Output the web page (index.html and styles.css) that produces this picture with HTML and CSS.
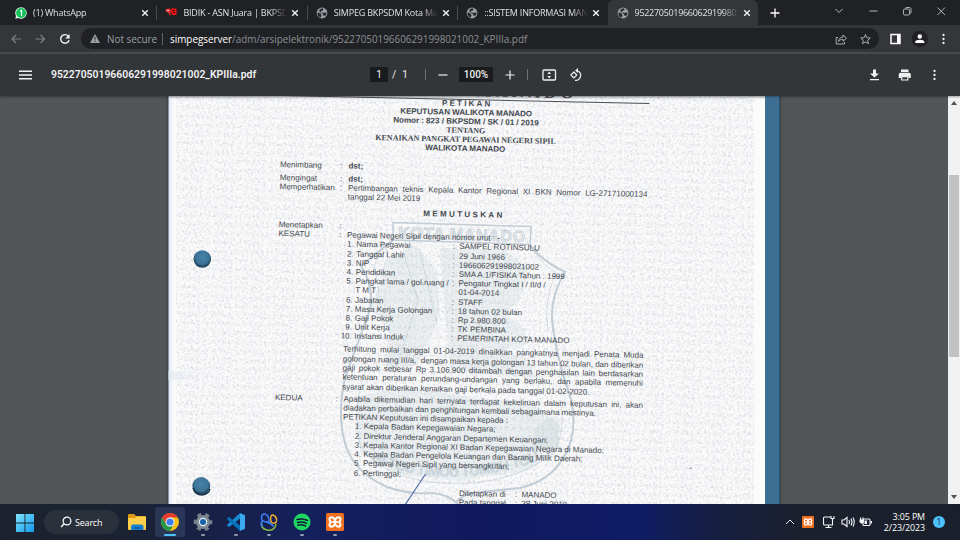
FILE: index.html
```html
<!DOCTYPE html>
<html lang="id">
<head>
<meta charset="utf-8">
<title>95227050196606291998021002_KPIIIa.pdf</title>
<link rel="stylesheet" href="styles.css">
</head>
<body>
<svg width="0" height="0" class="defs">
  <symbol id="globe" viewBox="0 0 12 12"><circle cx="6" cy="6" r="5.4" fill="#9aa0a6"/><path d="M1.5 5.2 4.6 6.6 5.6 8.2 4.7 10.6C2.4 10 1 7.800 1.500 5.200ZM4.200 2 6.600 1.300 7.600 2.200 6.800 3.600 5 4 4.600 5.200 7.600 6 9.800 5.200 10.600 6.400 9.600 8.600 7.700 8.900 6.900 6.900 3.800 5 3.200 3.400Z" fill="#292a2d"/></symbol>
  <symbol id="close" viewBox="0 0 8 8"><path d="M1.200 1.200 6.800 6.800M6.800 1.200 1.200 6.800" stroke="#f1f3f4" stroke-width="1.350" fill="none"/></symbol>
  <symbol id="xampp" viewBox="0 0 18 18"><rect width="18" height="18" rx="1.500" fill="#f0711f"/><path d="M9 7.300C8 5 7 4.300 5.700 4.300 4.200 4.300 3.500 5.200 3.500 6.600 3.500 8 4.300 8.500 5 9 4.300 9.500 3.500 10 3.500 11.400 3.500 12.800 4.200 13.700 5.700 13.700 7 13.700 8 13 9 10.700 10 13 11 13.700 12.300 13.700 13.800 13.700 14.500 12.800 14.500 11.400 14.500 10 13.700 9.500 13 9 13.700 8.500 14.500 8 14.500 6.600 14.500 5.200 13.800 4.300 12.300 4.300 11 4.300 10 5 9 7.300ZM6.500 9H11.500" fill="none" stroke="#fff" stroke-width="2"/></symbol>
</svg>

<header class="tabs">
  <div class="tab">
    <svg class="fav" viewBox="0 0 12 12"><path d="M6 .2a5.800 5.800 0 1 1-2.800 10.900L.3 11.800 1 8.900A5.800 5.800 0 0 1 6 .2Z" fill="#e8f5e9"/><circle cx="6.100" cy="6" r="5" fill="#18c25c"/><path d="M5 4.300 6.500 3.500V8.700" stroke="#fff" stroke-width="1.100" fill="none"/></svg>
    <span class="tab-name">(1) WhatsApp</span><svg class="x"><use href="#close"/></svg>
  </div>
  <div class="tab">
    <svg class="fav" viewBox="0 0 12 12"><path d="M.5 2 5 1.500 6 4.500 5 6 6 9 4 7.500 3 5.500 1 5Z" fill="#d33"/><path d="M6 1.500H11.500V7.500L8 8.500 6 6Z" fill="#e11"/><path d="M7.500 3.500H9.500M8 5.500H10" stroke="#300"/><path d="M2 3.500H4" stroke="#fff" stroke-width=".7"/></svg>
    <span class="tab-name">BIDIK - ASN Juara | BKPSDM</span><svg class="x"><use href="#close"/></svg>
  </div>
  <div class="tab">
    <svg class="fav"><use href="#globe"/></svg>
    <span class="tab-name">SIMPEG BKPSDM Kota Manado</span><svg class="x"><use href="#close"/></svg>
  </div>
  <div class="tab last">
    <svg class="fav"><use href="#globe"/></svg>
    <span class="tab-name">::SISTEM INFORMASI MANAJEMEN</span><svg class="x"><use href="#close"/></svg>
  </div>
  <div class="tab active">
    <svg class="fav"><use href="#globe"/></svg>
    <span class="tab-name">95227050196606291998021002</span><svg class="x"><use href="#close"/></svg>
  </div>
  <svg class="plus" viewBox="0 0 10 10"><path d="M5 .5V9.500M.5 5H9.500" stroke="#fff" stroke-width="1.300"/></svg>
  <svg class="window" viewBox="0 0 120 14"><g fill="none" stroke="#c4c7c9" stroke-width=".9"><path d="M6.500 5 10 8.500 13.500 5M40.500 7H48.500M108.500 3.500 116 11M116 3.500 108.500 11"/><rect x="74.500" y="5" width="6" height="6" rx="1.200"/><path d="M76.500 4.500C76.600 3.500 77 3.500 78 3.500H80.500C82 3.500 82 4.500 82 5.500V8C82 9 81.800 9.300 81 9.500"/></g></svg>
</header>

<nav class="address">
  <svg class="navs" viewBox="0 0 70 14"><g fill="none" stroke-width="1.200"><path d="M11 7H2M6 3 2 7 6 11M25.500 7H34.500M30.500 3 34.500 7 30.500 11" stroke="#7b7e82"/><path d="M58.200 4A4.300 4.300 0 1 0 59.100 8.200" stroke="#f1f3f4" stroke-width="1.400"/></g><path d="M59.600 2V6.400H55.200Z" fill="#f1f3f4"/></svg>
  <div class="omni">
    <svg class="warn" viewBox="0 0 10 9"><path d="M5 0 10 9H0Z" fill="#9aa0a6"/><path d="M5 3V5.700M5 6.700V7.800" stroke="#202124"/></svg>
    <span class="insecure">Not secure</span><i class="bar"></i>
    <span class="url"><b>simpegserver</b>/adm/arsipelektronik/95227050196606291998021002_KPIIIa.pdf</span>
    <svg class="omni-icons" viewBox="0 0 36 12"><g fill="none" stroke="#a9adb1" stroke-width="1"><path d="M3 4.500H1.200V11H9.500V9M3.500 8.500C3.800 5.500 5.500 4 8 4V2L11.500 5.200 8 8.300V6.300C6 6.300 4.500 7 3.500 8.500Z"/><path d="M30.500 1.500 31.900 4.700 35.300 5 32.700 7.300 33.500 10.700 30.500 8.900 27.500 10.700 28.300 7.300 25.700 5 29.100 4.700Z"/></g></svg>
  </div>
  <svg class="tools" viewBox="0 0 60 18"><rect x="1" y="4.500" width="9" height="9" fill="none" stroke="#fff" stroke-width="1.500"/><path d="M7 4.500H10V13.500H7Z" fill="#fff"/><circle cx="29.800" cy="9" r="8.300" fill="#202124"/><circle cx="29.800" cy="6.500" r="2.200" fill="#fff"/><path d="M25.200 13V12C25.200 9 34.400 9 34.400 12V13Z" fill="#fff"/><g fill="#e8eaed"><circle cx="53.500" cy="5" r="1.150"/><circle cx="53.500" cy="9" r="1.150"/><circle cx="53.500" cy="13" r="1.150"/></g></svg>
</nav>

<section class="pdfbar">
  <svg class="menu" viewBox="0 0 13 10"><path d="M0 1.200H13M0 5H13M0 8.800H13" stroke="#f1f1f1" stroke-width="1.500"/></svg>
  <h1>95227050196606291998021002_KPIIIa.pdf</h1>
  <div class="pager"><span class="field page">1</span><span class="of">/</span><span class="total">1</span></div>
  <i class="sep"></i>
  <svg class="sign" viewBox="0 0 10 10"><path d="M.5 5H9.500" stroke="#f1f1f1" stroke-width="1.200"/></svg>
  <span class="field zoom">100%</span>
  <svg class="sign" viewBox="0 0 10 10"><path d="M.5 5H9.500M5 .5V9.500" stroke="#f1f1f1" stroke-width="1.200"/></svg>
  <i class="sep after-zoom"></i>
  <svg class="fit" viewBox="0 0 42 14"><rect x="1" y="2" width="12.500" height="10" rx="1" fill="none" stroke="#f1f1f1" stroke-width="1.300"/><path d="M7.200 3.600 9 6H5.400ZM7.200 10.400 9 8H5.400Z" fill="#f1f1f1"/><g fill="none" stroke="#f1f1f1" stroke-width="1.200"><path d="M31.800 4 34.800 7 31.800 10 28.800 7ZM34.500 2.500A4.800 4.800 0 1 1 33 12.300"/></g><path d="M36 0V5L33 2.500Z" fill="#f1f1f1"/></svg>
  <svg class="actions" viewBox="0 0 70 14"><path d="M3 1.500H6V5.500H9L4.500 9.500 0 5.500H3ZM0 11H9V12.300H0Z" fill="#f1f1f1"/><path d="M31 1.500H38.500V4H31ZM30.500 4.700H39Q40.800 4.700 40.800 6.500V10H38.500V8H31V10H28.700V6.500Q28.700 4.700 30.500 4.700Z" fill="#f1f1f1"/><path d="M31.700 8.600H37.800V12H31.700Z" fill="none" stroke="#f1f1f1" stroke-width="1.200"/><g fill="#f1f1f1"><circle cx="64.500" cy="3" r="1.150"/><circle cx="64.500" cy="7" r="1.150"/><circle cx="64.500" cy="11" r="1.150"/></g></svg>
</section>

<main class="viewer">
  <article class="scan">
    <svg class="backdrop" viewBox="168 96 612 408">
      <defs>
        <pattern id="weave" width="31" height="9" patternUnits="userSpaceOnUse" patternTransform="rotate(1.200)"><path d="M1 2 2.500 5 4 2 6 6M8 6 9.500 2 11 6M13 5V2L15 6V3M18 2H20L18 6H21M24 6 25 3 27 5 29 2" fill="none" stroke="#6f7f86" stroke-opacity=".12" stroke-width=".7"/></pattern>
        <radialGradient id="hole" cx=".5" cy=".4"><stop offset="0" stop-color="#4682a9"/><stop offset=".8" stop-color="#3d7296"/><stop offset="1" stop-color="#244963"/></radialGradient>
        <linearGradient id="edge"><stop offset="0" stop-color="#dfe8f3"/><stop offset="1" stop-color="#fbfbfc"/></linearGradient>
        <linearGradient id="fold"><stop offset="0" stop-color="#d9e2ef"/><stop offset="1" stop-color="#fbfbfc" stop-opacity="0"/></linearGradient>
        <linearGradient id="shade" x2="0" y2="1"><stop offset="0" stop-color="#c7cbce"/><stop offset="1" stop-color="#fbfbfc" stop-opacity="0"/></linearGradient>
        <filter id="grain" x="0" y="0" width="1" height="1" color-interpolation-filters="sRGB"><feTurbulence type="fractalNoise" baseFrequency=".45" numOctaves="2" seed="4"/><feColorMatrix values="0 0 0 0 .45 0 0 0 0 .5 0 0 0 0 .56 .9 0 0 0 -.4"/></filter>
      </defs>
      <rect x="168" y="96" width="598" height="408" fill="#fbfbfc"/>
      <rect x="168" y="96" width="6" height="408" fill="url(#edge)"/>
      <rect x="168" y="96" width="598" height="5" fill="url(#shade)"/>
      <rect x="176" y="96" width="578" height="408" fill="url(#weave)"/>
      <rect x="176" y="96" width="578" height="408" filter="url(#grain)" opacity=".6"/>
      <rect x="765" y="96" width="15" height="408" fill="#3d6f94"/>
      <path d="M168.500 96V504" stroke="#4b6377" opacity=".6"/>
      <path d="M779.500 96V504" stroke="#29506c"/>
      <rect x="168" y="371" width="60" height="9" fill="url(#fold)" opacity=".5"/>
      <g fill="none" stroke="#aebdc9" stroke-opacity=".72">
        <path d="M393 222.500 531 226.500 530 244.500 393 240Z" stroke-width="1.500"/>
        <path d="M393 240 361 266Q377 292 368 315Q358 342 345 378Q336 420 347 449Q357 474 387 487Q410 495 433 493Q449 495 458 504M530 245Q542 261 565 272Q548 300 553 328Q559 368 570 395Q579 433 564 457Q550 481 520 488L482 492Q465 492 456 502" stroke-width="2"/>
        <path d="M388 250Q378 256 374 266Q382 292 376 314M533 250Q542 264 556 273Q543 300 548 332M363 377Q352 415 360 444Q378 475 430 482Q505 490 552 454Q567 435 560 400M403 252 418 300 394 375M420 252 437 325" stroke-width="1" stroke-opacity=".45"/>
      </g>
      <g fill="#b4c7cf" fill-opacity=".2">
        <path d="M385 260 415 245 437 270 440 315 418 365 383 370 390 330 370 304 380 286Z"/>
        <path d="M440 248 505 250 528 268 520 300 503 315 522 325 528 344 499 351 530 360 535 378 450 370Z"/>
        <path d="M356 397 400 387 535 405 560 425 558 448 530 470 460 481 400 475 360 453Z"/>
        <path d="M547 418Q559 415 559 422V445L534 454V430Z"/>
      </g>
      <g class="seal"><text transform="translate(398 238) rotate(1.700)" textLength="127">KOTA MANADO</text><path id="ribbon" d="M372 462Q450 492 540 460" fill="none"/><text class="motto"><textPath href="#ribbon">SI TOU TIMOU TUMOU TOU</textPath></text></g>
      <circle cx="202.300" cy="259" r="8.800" fill="url(#hole)"/><circle cx="201.300" cy="486" r="8.900" fill="url(#hole)"/>
      <path d="M193 488Q195 495 202 495 209 494 210 489" fill="none" stroke="#17364b" stroke-width="1.300"/>
      <path d="M425.500 474Q415 490 405 505" fill="none" stroke="#4a63a3" stroke-width="1.100"/>
      <path d="M689 468.500 692 468" stroke="#8993b5"/>
    </svg>
    <div class="sheet">
      <div class="town">MANADO</div>
      <div class="heading">
        <p class="wide">PETIKAN</p>
        <p>KEPUTUSAN WALIKOTA MANADO</p>
        <p>Nomor : 823 / BKPSDM / SK / 01 / 2019</p>
        <p class="serif">TENTANG</p>
        <p class="serif">KENAIKAN PANGKAT PEGAWAI NEGERI SIPIL</p>
        <p>WALIKOTA MANADO</p>
      </div>
      <div class="row first"><span>Menimbang</span><span>:</span><b>dst;</b></div>
      <div class="row second"><span>Mengingat</span><span>:</span><b>dst;</b></div>
      <div class="row"><span>Memperhatikan</span><span>:</span><div><p class="just">Pertimbangan teknis Kepala Kantor Regional XI BKN Nomor LG-27171000134</p><p>tanggal 22 Mei 2019</p></div></div>
      <p class="decide">MEMUTUSKAN</p>
      <div class="row"><span>Menetapkan</span><span>:</span></div>
      <div class="row"><span>KESATU</span><span>:</span><div><p>Pegawai Negeri Sipil dengan nomor urut : -</p></div></div>
      <div class="facts">
        <i>1.</i><span>Nama Pegawai</span><span>:</span><span>SAMPEL ROTINSULU</span>
        <i>2.</i><span>Tanggal Lahir</span><span>:</span><span>29 Juni 1966</span>
        <i>3.</i><span>NIP</span><span>:</span><span>196606291998021002</span>
        <i>4.</i><span>Pendidikan</span><span>:</span><span>SMA A.1/FISIKA Tahun : 1999</span>
        <i>5.</i><span>Pangkat lama / gol.ruang /</span><span>:</span><span>Pengatur Tingkat I / II/d /</span>
        <i></i><span>T M T</span><span></span><span>01-04-2014</span>
        <i>6.</i><span>Jabatan</span><span>:</span><span>STAFF</span>
        <i>7.</i><span>Masa Kerja Golongan</span><span>:</span><span>18 tahun 02 bulan</span>
        <i>8.</i><span>Gaji Pokok</span><span>:</span><span>Rp 2.980.800</span>
        <i>9.</i><span>Unit Kerja</span><span>:</span><span>TK PEMBINA</span>
        <i>10.</i><span>Instansi Induk</span><span>:</span><span>PEMERINTAH KOTA MANADO</span>
      </div>
      <div class="para">
        <p class="just">Terhitung mulai tanggal 01-04-2019 dinaikkan pangkatnya menjadi Penata Muda</p>
        <p class="just">golongan ruang III/a,&nbsp; dengan masa kerja golongan 13 tahun 02 bulan, dan diberikan</p>
        <p class="just">gaji pokok sebesar Rp 3.106.900 ditambah dengan penghasilan lain berdasarkan</p>
        <p class="just">ketentuan peraturan perundang-undangan yang berlaku, dan apabila memenuhi</p>
        <p>syarat akan diberikan kenaikan gaji berkala pada tanggal 01-02-2020.</p>
      </div>
      <div class="row kedua"><span>KEDUA</span><span>:</span>
        <div>
          <p class="just">Apabila dikemudian hari ternyata terdapat kekeliruan dalam keputusan ini, akan</p>
          <p>diadakan perbaikan dan penghitungan kembali sebagaimana mestinya.</p>
          <p>PETIKAN Keputusan ini disampaikan kepada :</p>
          <div class="copies">
            <p>1. Kepala Badan Kepegawaian Negara;</p>
            <p>2. Direktur Jenderal Anggaran Departemen Keuangan;</p>
            <p>3. Kepala Kantor Regional XI Badan Kepegawaian Negara di Manado;</p>
            <p>4. Kepala Badan Pengelola Keuangan dan Barang Milik Daerah;</p>
            <p>5. Pegawai Negeri Sipil yang bersangkutan;</p>
            <p>6. Pertinggal;</p>
          </div>
        </div>
      </div>
      <div class="signed"><span>Ditetapkan di</span><span>:</span><span>MANADO</span><span>Pada tanggal</span><span>:</span><span>28 Juni 2019</span></div>
    </div>
  </article>
  <div class="scroll"><i class="up"></i><i class="thumb"></i><i class="down"></i></div>
</main>

<footer class="taskbar">
  <svg class="start" viewBox="0 0 18 18"><defs><linearGradient id="win" x2="1" y2="1"><stop offset="0" stop-color="#7ee3fb"/><stop offset="1" stop-color="#1499ee"/></linearGradient></defs><path d="M0 0H8.500V8.500H0ZM9.400 0H18V8.500H9.400ZM0 9.400H8.500V18H0ZM9.400 9.400H18V18H9.400Z" fill="url(#win)"/></svg>
  <div class="search"><svg viewBox="0 0 12 12"><circle cx="7" cy="5" r="3.900" fill="none" stroke="#fff" stroke-width="1.200"/><path d="M4.200 7.800 1 11" stroke="#fff" stroke-width="1.400"/></svg>Search</div>
  <div class="apps">
    <div class="app"><svg viewBox="0 0 20 20"><path d="M1 3Q1 2 2 2H7L9 4H18Q19 4 19 5V9H1Z" fill="#dd9c13"/><path d="M1 6H8L10 4.500H18Q19 4.500 19 6V17Q19 18 18 18H2Q1 18 1 17Z" fill="#fdcf4a"/><path d="M4 18V14.500Q4 12.500 6 12.500H14Q16.500 12.500 16.500 14.500V18Z" fill="#1680d0"/><path d="M7 16H13.500" stroke="#0b5ba5" stroke-width="1.500"/></svg></div>
    <div class="app on"><svg viewBox="0 0 20 20"><circle cx="10" cy="10" r="9" fill="#fbc116"/><path d="M2.200 5.500A9 9 0 0 1 17.800 5.500H10L6.100 12.300Z" fill="#e33b2e"/><path d="M2.200 5.500 6.100 12.300 10 14.500 13.900 12.300 9.900 19A9 9 0 0 1 2.200 5.500Z" fill="#279847"/><circle cx="10" cy="10" r="4.500" fill="#fff"/><circle cx="10" cy="10" r="3.600" fill="#3b7ded"/></svg></div>
    <div class="app run"><svg viewBox="0 0 20 20"><circle cx="10" cy="10" r="7.800" fill="none" stroke="#76818b" stroke-width="3" stroke-dasharray="4.100 4.068" stroke-dashoffset="2"/><circle cx="10" cy="10" r="7" fill="#7d8892"/><circle cx="10" cy="10" r="4.200" fill="#e5edf4"/><circle cx="10" cy="10" r="3" fill="#1763aa"/></svg></div>
    <div class="app run"><svg viewBox="0 0 20 20"><path d="M14 1 2 12 .8 13.200 3 15 14 6.500Z" fill="#178bd4"/><path d="M14 19 2 8 .8 6.800 3 5 14 13.500Z" fill="#0872b9"/><path d="M14 1 19 3.300V16.700L14 19Z" fill="#3aa9ee"/></svg></div>
    <div class="app run"><svg viewBox="0 0 20 20"><g fill="none" stroke-width="1.500"><path d="M10 10C10.500 4 7 1.500 4.500 2 2 3 2 7 3.500 8.500Q6 10.500 10 10Z" stroke="#3b82f2"/><path d="M12 10C11 5 12 2.500 14 3 17.500 4.500 18.500 8 17 10.500Q14 12 12 10Z" stroke="#f3ac2e"/><path d="M17 12C16.500 17 12 19 8 18 4 17 2 14.500 2.500 11" stroke="#86bb46"/><path d="M3.500 8.500Q1.500 11 3 14.500M7 9.800Q12 11 14.500 14.500" stroke="#3b82f2"/></g></svg></div>
    <div class="app run"><svg viewBox="0 0 20 20"><circle cx="10" cy="10" r="8.500" fill="#1ed760"/><path d="M5 7.500Q10.500 6 15.500 8.500M5.500 10.500Q10 9 14.500 11.300M6 13.200Q10 12.200 13.500 14" fill="none" stroke="#111a38" stroke-width="1.500" stroke-linecap="round"/></svg></div>
    <div class="app run"><svg viewBox="-1 -1 20 20"><use href="#xampp" width="18" height="18"/></svg></div>
  </div>
  <div class="tray">
    <svg class="chev" viewBox="0 0 10 6"><path d="M1 5 5 1 9 5" fill="none" stroke="#e4e8ee"/></svg>
    <svg class="mini"><use href="#xampp"/></svg>
    <svg class="status" viewBox="0 0 50 14"><g fill="none" stroke="#f2f4f7" stroke-width="1.100"><path d="M8.500 2H2.500Q1.500 2 1.500 3V9Q1.500 10 2.500 10H10.500V7M6.500 10V12.500M3.500 12.500H9.500M10.500 7V4M9 1V3.500H12V1"/><path d="M20 5H22L25 2.500V11.500L22 9H20ZM27 5Q28.200 7 27 9M29 3.500Q31 7 29 10.500M31 2.500Q33.500 7 31 11.500"/><rect x="41" y="4" width="7" height="6.500" rx="1"/></g><path d="M42.500 5.500H45V9H42.500ZM37.500 4.500H42V7L40.500 8.500H39L37.500 7ZM38 2.500H39.200V5H38ZM40.500 2.500H41.700V5H40.500ZM48.500 6H50V8.500H48.500Z" fill="#f2f4f7"/></svg>
    <div class="clock"><span>3:05 PM</span><span>2/23/2023</span></div>
    <span class="badge">1</span>
  </div>
</footer>
</body>
</html>
```

FILE: styles.css
```css
* { box-sizing: border-box; }
body { margin: 0; width: 960px; height: 540px; overflow: hidden; background: #202124; font-family: "Open Sans", "Noto Sans", sans-serif; display: flex; flex-direction: column; }
p, h1 { margin: 0; }
i { font-style: normal; }
svg { flex: none; display: block; }
.defs { position: absolute; }

.tabs { height: 25px; flex: none; display: flex; align-items: center; padding-left: 6px; background: #202124; color: #dfe1e5; font-size: 9px; }
.tab { width: 150.4px; height: 25px; flex: none; display: flex; align-items: center; padding-left: 9px; position: relative; }
.tab:not(.last):not(.active)::after { content: ""; position: absolute; right: -1px; top: 6px; width: 1px; height: 14px; background: #4b4d51; }
.tab.active { background: #35363a; border-radius: 6px 6px 0 0; }
.fav { width: 12px; height: 12px; }
.tab-name { width: 104px; margin-left: 6px; overflow: hidden; white-space: nowrap; letter-spacing: -.2px; mask-image: linear-gradient(90deg, #000 84%, transparent 100%); }
.active .tab-name { letter-spacing: -.3px; }
.x { width: 8px; height: 8px; margin-left: 4px; }
.plus { width: 10px; height: 10px; margin-left: 12px; }
.window { width: 120px; height: 14px; margin: -3px 0 0 49.500px; }

.address { height: 29px; flex: none; display: flex; align-items: center; background: #35363a; border-bottom: 2px solid #4a4b4f; }
.navs { width: 70px; height: 14px; margin-left: 10px; }
.omni { width: 798px; height: 21px; margin-left: 1px; border-radius: 11px; background: #202124; display: flex; align-items: center; padding-left: 9px; font-size: 9.900px; color: #9aa0a6; white-space: nowrap; }
.warn { width: 10px; height: 9px; }
.insecure { margin-left: 7px; width: 50px; }
.bar { width: 1px; height: 12px; background: #5f6368; margin: 0 7px 0 5px; }
.url { flex: 1; color: #8b9095; }
.url b { color: #fff; font-weight: 400; }
.omni-icons { width: 36px; height: 12px; margin-right: 8px; }
.tools { width: 60px; height: 18px; margin-left: 11px; }

.pdfbar { height: 42px; flex: none; display: flex; align-items: center; padding-bottom: 1px; background: #323639; color: #f1f1f1; font-family: Roboto, sans-serif; font-size: 10px; position: relative; z-index: 2; box-shadow: 0 1px 2px rgba(0, 0, 0, .35); }
.menu { width: 13px; height: 10px; margin-left: 19px; }
h1 { width: 206px; margin-left: 19px; font-size: 10.400px; font-weight: 600; white-space: nowrap; }
.pager { margin-left: 113px; width: 55px; display: flex; align-items: center; }
.field { height: 15px; line-height: 15px; background: #191b1c; text-align: center; }
.page { width: 18px; }
.of { margin-left: 4px; }
.total { margin-left: 6px; }
.sep { width: 1px; height: 11px; background: #707274; }
.sign { width: 10px; height: 10px; margin-left: 12px; }
.zoom { width: 34px; margin-left: 11px; font-weight: 500; }
.after-zoom { margin-left: 12px; }
.fit { width: 42px; height: 14px; margin-left: 14px; }
.actions { width: 70px; height: 14px; margin-left: 286px; }

.viewer { height: 408px; flex: none; display: flex; background: #525659; padding-left: 168px; overflow: hidden; }
.scan { width: 612px; height: 408px; flex: none; position: relative; overflow: hidden; box-shadow: 0 0 3px #2d3032; }
.backdrop { position: absolute; inset: 0; width: 612px; height: 408px; }
.seal text { font: bold 16px "Liberation Sans", sans-serif; fill: #d5dde3; fill-opacity: .5; stroke: #aebdc9; stroke-width: .6; stroke-opacity: .75; }
.seal .motto { font-size: 14px; fill: #b9c8d2; letter-spacing: -.6px; stroke-opacity: .3; }
.sheet { position: relative; width: 368px; margin: -14px 0 0 112px; transform: rotate(1.230deg); transform-origin: 0 83px; font: 8px/9.200px "Liberation Sans", Arial, sans-serif; color: #43484e; white-space: nowrap; }
.sheet p { height: 9.250px; line-height: 9.250px; }
.town { height: 13.500px; border-bottom: 1px solid #4b4e52; font: bold 17px/17px "Liberation Serif", serif; letter-spacing: 3.900px; padding-left: 194px; display: flex; align-items: flex-end; }
.heading { text-align: center; font-weight: bold; font-size: 8px; margin-top: -.5px; }
.heading p { height: 9.100px; line-height: 9.100px; margin-left: 2px; }
.heading .wide { letter-spacing: 2.200px; padding-left: 2px; }
.heading .serif { font-family: "Liberation Serif", serif; font-size: 8px; }
.row { display: grid; grid-template-columns: 60.500px 8px 299.500px; }
.first { margin-top: 10.200px; }
.second { margin-top: 3.800px; }
.just { text-align: justify; text-align-last: justify; }
.sheet .decide { text-align: center; font-weight: bold; letter-spacing: 2.350px; margin: 5.200px 0 5.100px; padding-left: 2px; }
.facts { display: grid; grid-template-columns: 13.500px 97.500px 6.500px 1fr; grid-auto-rows: 9.200px; margin-left: 63.500px; }
.facts i { display: flex; justify-content: flex-end; padding-right: 1.500px; }
.facts i + span { padding-left: 1px; }
.para { margin: 3.700px 0 2.700px 67px; padding-right: .5px; }
.sheet .para p { height: 9.350px; }
.copies { padding-left: 12px; }
.signed { display: grid; grid-template-columns: 56px 6.500px 1fr; margin: 9.300px 0 0 186px; }

.scroll { width: 12px; margin-left: auto; background: #f1f1f1; display: flex; flex-direction: column; align-items: center; }
.thumb { width: 10px; height: 182px; background: #c1c1c1; margin-top: 70px; }
.up, .down { width: 0; height: 0; border: 3px solid transparent; }
.up { border-bottom: 4px solid #505050; margin-top: 2px; }
.down { border-top: 4px solid #505050; margin: auto 0 2px; }

.taskbar { height: 36px; flex: none; display: flex; align-items: center; color: #fff; background: linear-gradient(90deg, #1c222d 0%, #1a2233 13%, #14205c 32%, #10195d 50%, #0e1c66 66%, #151e42 74%, #1b202c 84%, #1a202b 100%); position: relative; z-index: 3; }
.start { width: 18px; height: 18px; margin-left: 16px; margin-top: 1px; }
.search { width: 75px; height: 24px; margin-left: 10px; border-radius: 12px; background: #2b313b; display: flex; align-items: center; padding-left: 16px; gap: 3px; font-size: 9px; letter-spacing: -.2px; }
.search svg { width: 12px; height: 12px; }
.apps { display: flex; gap: 3px; margin-left: 3px; }
.app { width: 30px; height: 30px; border-radius: 3px; display: flex; justify-content: center; padding-top: 5px; position: relative; }
.app svg { width: 20px; height: 20px; }
.app.on { background: rgba(110, 135, 190, .2); }
.app.on::after, .app.run::after { content: ""; position: absolute; left: 13px; bottom: 1px; width: 4px; height: 2px; border-radius: 1px; background: #9299ad; }
.app.on::after { left: 9px; width: 12px; background: #4cc2ff; }
.tray { display: flex; align-items: center; margin-left: auto; padding-right: 15px; }
.chev { width: 10px; height: 6px; }
.mini { width: 12px; height: 12px; margin-left: 7px; }
.status { width: 50px; height: 14px; margin-left: 8px; }
.clock { width: 53px; display: flex; flex-direction: column; align-items: flex-end; font-size: 8.900px; line-height: 11.500px; letter-spacing: -.1px; }
.badge { width: 12px; height: 12px; margin-left: 8px; border-radius: 50%; background: #4cc2ff; color: #10202c; font-size: 8.500px; line-height: 12px; text-align: center; }
```
